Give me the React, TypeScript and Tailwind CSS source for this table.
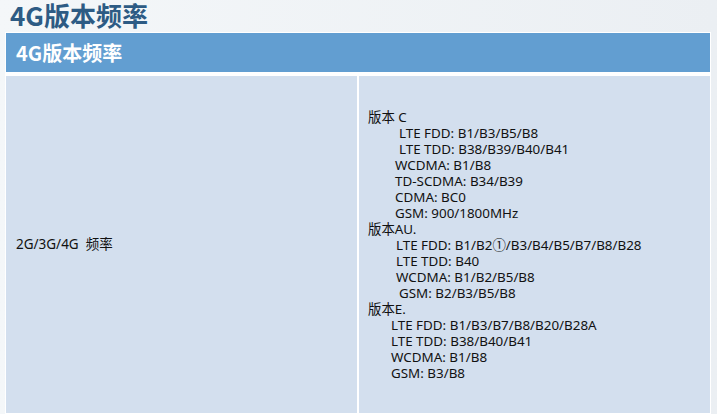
import React from "react";

const lines: { t: string; x: number }[] = [
  { t: "版本 C", x: 0 },
  { t: "LTE FDD: B1/B3/B5/B8", x: 31 },
  { t: "LTE TDD: B38/B39/B40/B41", x: 31 },
  { t: "WCDMA: B1/B8", x: 27 },
  { t: "TD-SCDMA: B34/B39", x: 27 },
  { t: "CDMA: BC0", x: 27 },
  { t: "GSM: 900/1800MHz", x: 27 },
  { t: "版本AU.", x: 0 },
  { t: "LTE FDD: B1/B2①/B3/B4/B5/B7/B8/B28", x: 28 },
  { t: "LTE TDD: B40", x: 28 },
  { t: "WCDMA: B1/B2/B5/B8", x: 28 },
  { t: "GSM: B2/B3/B5/B8", x: 31 },
  { t: "版本E.", x: 0 },
  { t: "LTE FDD: B1/B3/B7/B8/B20/B28A", x: 23 },
  { t: "LTE TDD: B38/B40/B41", x: 23 },
  { t: "WCDMA: B1/B8", x: 23 },
  { t: "GSM: B3/B8", x: 23 },
];

export default function App() {
  return (
    <div
      className="w-[717px] h-[414px] overflow-hidden bg-gradient-to-r from-[#f4f7f9] to-[#ebeff3] flex flex-col"
      style={{ fontFamily: '"Noto Sans", "Noto Sans CJK SC", sans-serif' }}
    >
      <div className="h-[32px] pl-[10px]">
        <h1
          className="text-[26px] leading-[30px] font-bold text-[#2d5b84]"
          style={{ fontFamily: '"Noto Sans CJK SC", sans-serif' }}
        >
          4G版本频率
        </h1>
      </div>
      <div className="ml-[5px] w-[706px] flex-1 bg-white p-px flex flex-col gap-[4px]">
        <div className="h-[39px] bg-[#629ed1] flex items-center pl-[10px]">
          <span
            className="text-[20px] font-bold text-white"
            style={{ fontFamily: '"Noto Sans CJK SC", sans-serif' }}
          >
            4G版本频率
          </span>
        </div>
        <div className="flex-1 flex gap-[2px]">
          <div className="w-[351px] bg-[#d3dfee] flex items-center pl-[10px]">
            <span className="text-[13.5px] text-[#111] whitespace-pre">2G/3G/4G  频率</span>
          </div>
          <div className="flex-1 bg-[#d3dfee] flex flex-col justify-center pl-[9px] pt-[1px]">
            {lines.map((l, i) => (
              <div
                key={i}
                className="text-[13.4px] leading-[16px] text-[#111] whitespace-pre"
                style={{ paddingLeft: l.x }}
              >
                {l.t}
              </div>
            ))}
          </div>
        </div>
      </div>
    </div>
  );
}
